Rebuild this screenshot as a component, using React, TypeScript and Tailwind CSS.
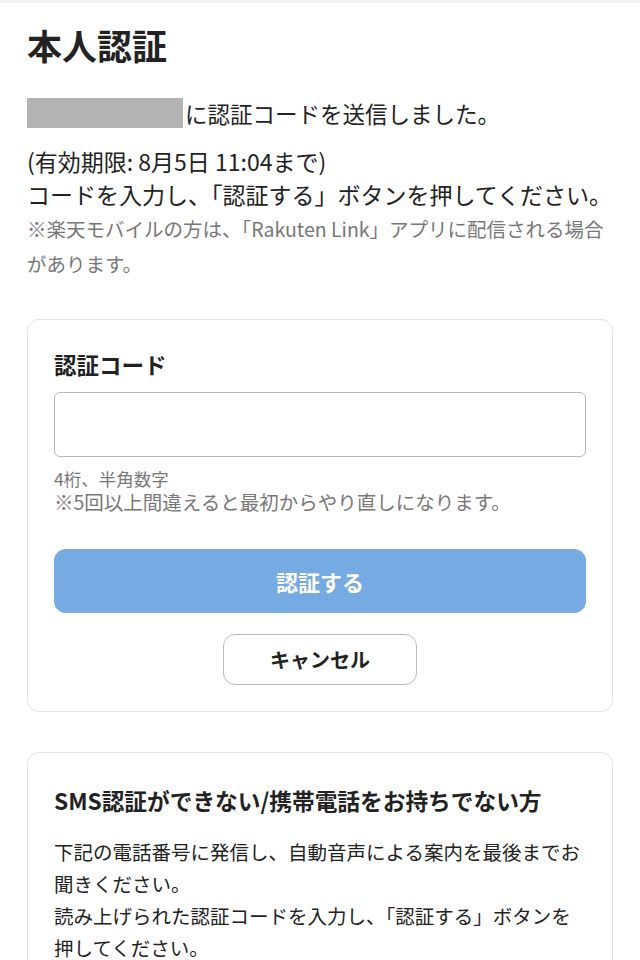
import React from "react";

export default function App() {
  return (
    <div
      className="min-h-[960px] w-[640px] bg-white text-[#222]"
      style={{ fontFamily: '"Noto Sans CJK JP", "Noto Sans", sans-serif' }}
    >
      <div className="h-[3px] bg-[#f3f3f3]" />
      <div className="px-[27px]">
        <h1 className="mt-[17px] text-[35px] font-bold leading-[50px] text-[#222]">本人認証</h1>

        <div className="mt-[28px] flex h-[30px] items-center">
          <div className="h-[30px] w-[156px] bg-[#b3b3b3]" />
          <span className="ml-[2px] text-[22.5px] leading-[30px]">に認証コードを送信しました。</span>
        </div>

        <p className="mt-[17px] whitespace-nowrap text-[23px] leading-[33px]">
          (有効期限: 8月5日 11:04まで)
          <br />
          コードを入力し、「認証する」ボタンを押してください。
        </p>
        <p className="whitespace-nowrap text-[19.5px] leading-[35px] text-[#777]">
          ※楽天モバイルの方は、「Rakuten Link」アプリに配信される場合
          <br />
          があります。
        </p>

        <section className="mt-[38px] rounded-[12px] border border-[#e2e2e2] px-[26px] pt-[28px] pb-[26px]">
          <label className="block text-[22.5px] font-bold leading-[32px]">認証コード</label>
          <input
            type="text"
            aria-label="認証コード"
            className="mt-[12px] block h-[65px] w-full rounded-[6px] border border-[#b8b8b8] bg-white px-3 text-[20px] outline-none"
          />
          <div className="mt-[11px] text-[#777]">
            <div className="text-[17.5px] leading-[22px]">4桁、半角数字</div>
            <div className="text-[19.5px] leading-[24px]">※5回以上間違えると最初からやり直しになります。</div>
          </div>
          <button className="mt-[35px] flex h-[64px] w-full items-center justify-center rounded-[12px] bg-[#75aae3] text-[22px] font-bold text-white">
            認証する
          </button>
          <div className="mt-[21px] flex justify-center">
            <button className="flex h-[51px] w-[194px] items-center justify-center rounded-[12px] border border-[#bcbcbc] bg-white text-[20px] font-bold text-[#222]">
              キャンセル
            </button>
          </div>
        </section>

        <section className="mt-[40px] rounded-[12px] border border-[#e2e2e2] px-[26px] pt-[32px] pb-[26px]">
          <h2 className="whitespace-nowrap text-[22.7px] font-bold leading-[32px]">
            SMS認証ができない/携帯電話をお持ちでない方
          </h2>
          <p className="mt-[19px] whitespace-nowrap text-[19.5px] leading-[32px]">
            下記の電話番号に発信し、自動音声による案内を最後までお
            <br />
            聞きください。
            <br />
            読み上げられた認証コードを入力し、「認証する」ボタンを
            <br />
            押してください。
          </p>
        </section>
      </div>
    </div>
  );
}
